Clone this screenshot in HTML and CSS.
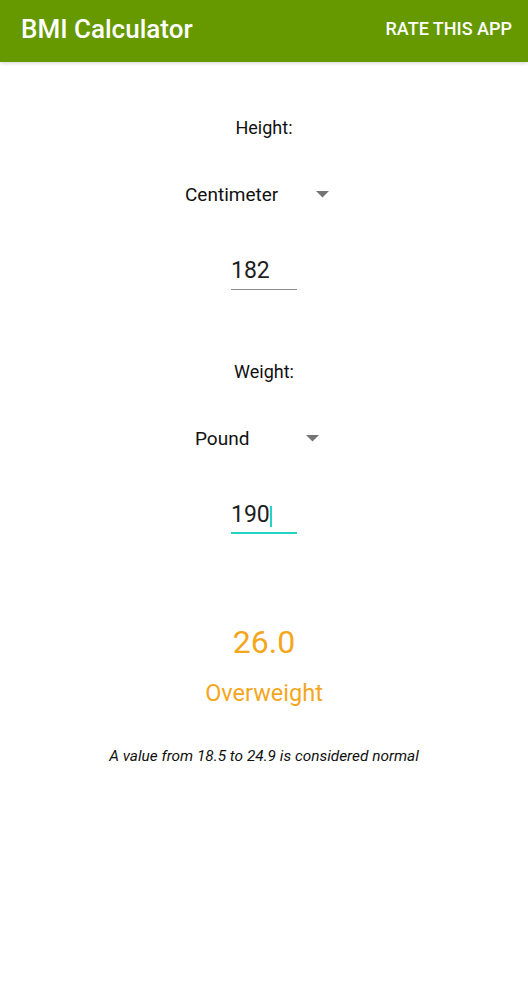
FILE: index.html
```html
<!DOCTYPE html>
<html>
<head>
<meta charset="utf-8">
<link rel="stylesheet" href="styles.css">
</head>
<body>
<header class="appbar">
  <div class="title">BMI Calculator</div>
  <div class="action">RATE THIS APP</div>
</header>
<main class="content">
  <div class="label label-height">Height:</div>
  <div class="spinner spinner-cm">
    <span class="spinner-text">Centimeter</span>
    <svg class="arrow" width="13" height="7" viewBox="0 0 13 7"><path d="M0 0H13L6.5 6.5Z" fill="#757575"/></svg>
  </div>
  <div class="field">182</div>
  <div class="label label-weight">Weight:</div>
  <div class="spinner spinner-lb">
    <span class="spinner-text">Pound</span>
    <svg class="arrow" width="13" height="7" viewBox="0 0 13 7"><path d="M0 0H13L6.5 6.5Z" fill="#757575"/></svg>
  </div>
  <div class="field field-focused">190<span class="cursor"></span></div>
  <div class="bmi">26.0</div>
  <div class="category">Overweight</div>
  <div class="note">A value from 18.5 to 24.9 is considered normal</div>
</main>
</body>
</html>
```

FILE: styles.css
```css
html, body {
  margin: 0;
  padding: 0;
  background: #ffffff;
  font-family: Roboto, "Noto Sans", sans-serif;
}

.appbar {
  height: 62px;
  box-sizing: border-box;
  background: #669900;
  display: flex;
  align-items: center;
  justify-content: space-between;
  padding: 0 16px 5px 21px;
  box-shadow: 0 1px 4px rgba(0, 0, 0, 0.18);
  color: #ffffff;
}

.title {
  font-size: 26px;
  font-weight: 500;
  line-height: 30px;
}

.action {
  font-size: 18px;
  font-weight: 500;
  line-height: 22px;
}

.content {
  display: flex;
  flex-direction: column;
  align-items: center;
}

.label {
  font-size: 18px;
  line-height: 24px;
  color: #111111;
}

.label-height {
  margin-top: 54px;
}

.label-weight {
  margin-top: 70px;
}

.spinner {
  display: flex;
  align-items: center;
  justify-content: space-between;
  padding-right: 14px;
  height: 24px;
  margin-top: 43px;
  font-size: 19px;
  line-height: 24px;
  color: #111111;
}

.spinner-cm {
  width: 144px;
}

.spinner-lb {
  width: 124px;
}

.arrow {
  display: block;
  margin-top: -2px;
}

.field {
  width: 66px;
  box-sizing: border-box;
  margin-top: 50px;
  font-size: 23px;
  line-height: 28px;
  color: #1e1e1e;
  padding-bottom: 4px;
  border-bottom: 1px solid #8a8a8a;
  display: flex;
  align-items: center;
}

.field-focused {
  padding-bottom: 3px;
  border-bottom: 2px solid #26d3c4;
}

.cursor {
  display: block;
  width: 2px;
  height: 21px;
  background: #26d3c4;
  margin-top: 3px;
}

.bmi {
  margin-top: 88px;
  font-size: 32px;
  line-height: 40px;
  color: #f4a61d;
}

.category {
  margin-top: 16px;
  font-size: 23.5px;
  line-height: 30px;
  color: #f4a61d;
}

.note {
  margin-top: 38px;
  font-size: 15.4px;
  line-height: 20px;
  font-style: italic;
  color: #111111;
}
```
